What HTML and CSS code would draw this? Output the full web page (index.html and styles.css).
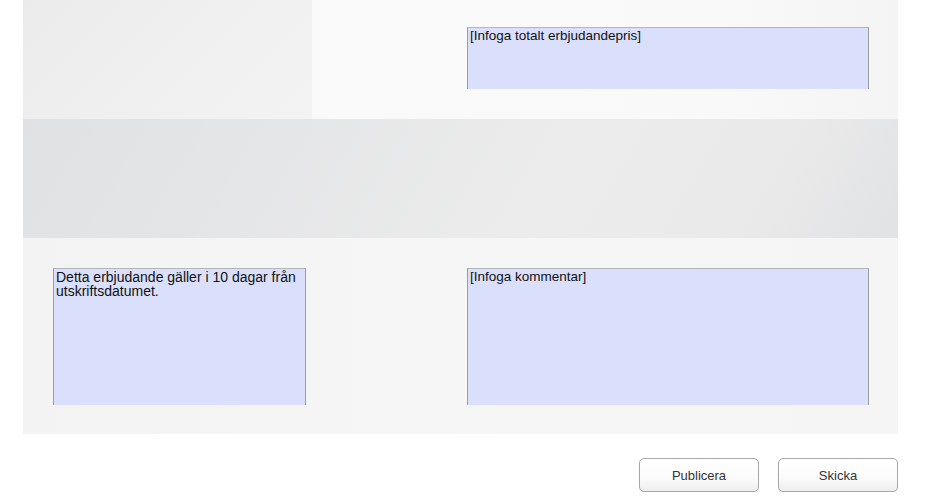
FILE: index.html
```html
<!DOCTYPE html>
<html>
<head>
<meta charset="utf-8">
<link rel="stylesheet" href="styles.css">
</head>
<body>
<div class="panel">
  <div class="top">
    <div class="top-left"></div>
    <div class="top-right">
      <div class="field field-price">[Infoga totalt erbjudandepris]</div>
    </div>
  </div>
  <div class="band"></div>
  <div class="bottom">
    <div class="field field-terms">Detta erbjudande gäller i 10 dagar från utskriftsdatumet.</div>
    <div class="field field-comment">[Infoga kommentar]</div>
  </div>
</div>
<div class="actions">
  <button class="btn">Publicera</button>
  <button class="btn">Skicka</button>
</div>
</body>
</html>
```

FILE: styles.css
```css
html, body {
  margin: 0;
  padding: 0;
  background: #ffffff;
  font-family: "Liberation Sans", Arial, sans-serif;
}
.panel {
  margin-left: 23px;
  width: 875px;
}
.top {
  display: flex;
  height: 119px;
}
.top-left {
  width: 289px;
  background: linear-gradient(135deg, #ebebeb 0%, #f0f0f0 55%, #f3f3f3 100%);
}
.top-right {
  flex: 1;
  padding: 27px 0 0 155px;
  background: linear-gradient(90deg, #fafafa 0%, #f9f9f9 70%, #f4f4f4 100%);
}
.band {
  height: 119px;
  background: linear-gradient(120deg, #dfe1e3 0%, #e5e6e7 30%, #ececec 60%, #e9e9e9 85%, #e0e2e4 100%);
}
.bottom {
  height: 196px;
  box-sizing: border-box;
  padding: 30px 0 0 30px;
  display: flex;
  align-items: flex-start;
  background: linear-gradient(90deg, #f3f3f3 0%, #f6f6f6 50%, #f5f5f5 100%);
}
.field {
  box-sizing: border-box;
  background: #dae0fb;
  border: 1px solid #9c9c9c;
  border-bottom: none;
  border-top-color: #b4b4bc;
  font-size: 13.5px;
  line-height: 13px;
  color: #111;
  padding: 1px 2px 0 2px;
}
.field-price {
  width: 402px;
  height: 62px;
}
.field-terms {
  width: 253px;
  height: 137px;
  font-size: 14px;
  line-height: 14px;
}
.field-comment {
  width: 402px;
  height: 137px;
  margin-left: 161px;
}
.actions {
  display: flex;
  justify-content: flex-end;
  gap: 19px;
  width: 898px;
  margin-top: 24px;
}
.btn {
  width: 120px;
  height: 34px;
  box-sizing: border-box;
  border: 1px solid #a8a8a8;
  border-radius: 5px;
  background: linear-gradient(180deg, #ffffff 0%, #fbfbfb 60%, #eeeeee 100%);
  box-shadow: 0 1px 1px rgba(0,0,0,0.12);
  font-family: "Liberation Sans", Arial, sans-serif;
  font-size: 13px;
  color: #333;
  padding: 0;
}
```
